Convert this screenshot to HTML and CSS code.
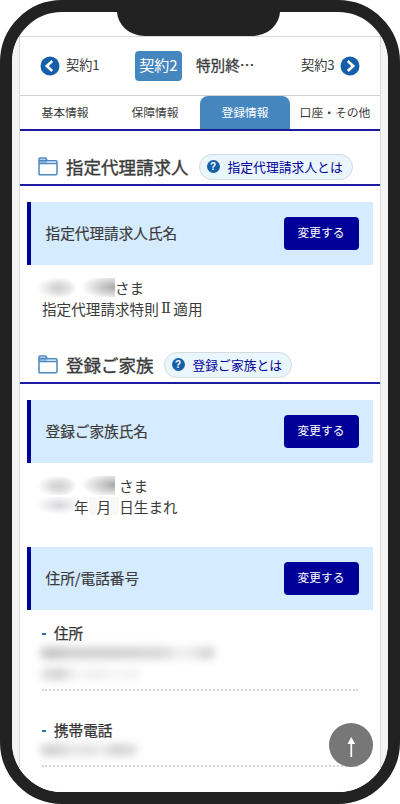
FILE: index.html
```html
<!DOCTYPE html>
<html lang="ja">
<head>
<meta charset="utf-8">
<title>登録情報</title>
<link rel="stylesheet" href="styles.css">
</head>
<body>
<svg class="defs" width="0" height="0">
  <symbol id="folder" viewBox="0 0 20 19">
    <path d="M1 17.6V2.2Q1 1 2.2 1H7Q8 1 8.4 2L9.2 3.8H17.8Q19 3.8 19 5V16.6Q19 17.8 17.8 17.8H1.6Q1 17.8 1 17M1 6.6H19M1.5 3.8H9" fill="none" stroke="#4a88c4" stroke-width="1.5"/>
    <path d="M1.5 2h6.5l1.2 4.2H1.5z" fill="#4a88c4" fill-opacity=".45"/>
  </symbol>
</svg>
<div class="phone">
  <div class="notch"></div>
  <div class="screen">
    <main class="app">
      <nav class="contracts">
        <svg class="arrow" viewBox="0 0 20 20"><circle cx="10" cy="10" r="9.5" fill="#155fa9"/><path d="M12.2 5L6.8 10l5.4 5" fill="none" stroke="#fff" stroke-width="2.6"/></svg>
        <span class="contract prev">契約1</span>
        <span class="current">契約2</span>
        <span class="plan">特別終<span class="dots">…</span></span>
        <span class="contract next">契約3</span>
        <svg class="arrow" viewBox="0 0 20 20"><circle cx="10" cy="10" r="9.5" fill="#155fa9"/><path d="M7.8 5l5.4 5-5.4 5" fill="none" stroke="#fff" stroke-width="2.6"/></svg>
      </nav>
      <nav class="tabs">
        <span class="tab">基本情報</span>
        <span class="tab">保障情報</span>
        <span class="tab active">登録情報</span>
        <span class="tab">口座・その他</span>
      </nav>
      <section class="agent">
        <header class="heading">
          <svg class="folder"><use href="#folder"/></svg>
          <h2>指定代理請求人</h2>
          <span class="help"><i>?</i>指定代理請求人とは</span>
        </header>
        <div class="bar"><h3>指定代理請求人氏名</h3><button>変更する</button></div>
        <div class="details">
          <p><span class="mask name"></span>さま</p>
          <p class="indent">指定代理請求特則<span class="numeral">Ⅱ</span>適用</p>
        </div>
      </section>
      <section class="family">
        <header class="heading">
          <svg class="folder"><use href="#folder"/></svg>
          <h2>登録ご家族</h2>
          <span class="help"><i>?</i>登録ご家族とは</span>
        </header>
        <div class="bar"><h3>登録ご家族氏名</h3><button>変更する</button></div>
        <div class="details">
          <p><span class="mask name"></span><span class="honor">さま</span></p>
          <p><span class="mask year"></span>年<span class="mask month"></span>月<span class="mask day"></span>日生まれ</p>
        </div>
      </section>
      <section class="address">
        <div class="bar"><h3>住所/電話番号</h3><button>変更する</button></div>
        <div class="item first">
          <h4>住所</h4>
          <span class="mask line1"></span>
          <span class="mask line2"></span>
        </div>
        <div class="item second">
          <h4>携帯電話</h4>
          <span class="mask line3"></span>
        </div>
      </section>
    </main>
  </div>
  <div class="to-top"><svg viewBox="0 0 44 44"><path d="M22.3 34V19" stroke="#fff" stroke-width="1.7"/><path d="M22.3 14l3.8 7h-7.6z" fill="#fff"/></svg></div>
</div>
</body>
</html>
```
FILE: styles.css
```css
* { box-sizing: border-box; }
body {
  margin: 0;
  background: #fff;
  color: #3a3a3a;
  font-family: "Noto Sans CJK JP", sans-serif;
}
h2, h3, h4, p { margin: 0; font-weight: 400; }
.defs { position: absolute; }

.phone {
  position: relative;
  width: 400px;
  height: 804px;
  border: 12px solid #222;
  border-radius: 62px;
  overflow: hidden;
  background: #fff;
}
.notch {
  position: absolute;
  top: -1px;
  left: 105px;
  width: 163px;
  height: 25px;
  background: #222;
  border-radius: 0 0 28px 28px / 0 0 25px 25px;
}
.screen {
  margin-top: 24px;
  height: 756px;
  padding: 0 7px;
  background: #f4f4f4;
}
.app {
  height: 756px;
  background: #fff;
  border: 1px solid #d9d9d9;
  border-bottom: 0;
}

.contracts {
  display: flex;
  align-items: center;
  height: 59px;
  padding: 0 20px;
  border-bottom: 1px solid #d0d0d0;
  white-space: nowrap;
}
.arrow { width: 20px; height: 20px; flex: none; }
.contract { font-size: 13.2px; line-height: 20px; padding-bottom: 2px; }
.prev { margin-left: 6px; width: 69px; }
.current {
  width: 47px;
  height: 30px;
  border-radius: 4px;
  background: #4686bf;
  color: #fff;
  font-size: 15px;
  line-height: 27px;
  text-align: center;
}
.plan {
  margin-left: 14px;
  width: 105px;
  padding-bottom: 2px;
  font-size: 14.6px;
  line-height: 20px;
  -webkit-text-stroke: .3px #3a3a3a;
}
.next { width: 39px; }

.tabs {
  display: flex;
  height: 35px;
  border-bottom: 2px solid #1b1b9f;
}
.tab {
  width: 90.25px;
  font-size: 11.8px;
  line-height: 32px;
  text-align: center;
  white-space: nowrap;
}
.active {
  background: #4686bf;
  color: #fff;
  border-radius: 8px 8px 0 0;
}

.heading {
  display: flex;
  align-items: center;
  height: 55px;
  padding: 18px 0 0 18px;
  border-bottom: 2px solid #1b1b9f;
}
.folder { width: 20px; height: 19px; }
h2 {
  margin-left: 8px;
  font-size: 17.5px;
  line-height: 26px;
  -webkit-text-stroke: .35px #3a3a3a;
}
.help {
  display: flex;
  align-items: center;
  margin-left: 10px;
  height: 26px;
  padding: 0 9px 1px 7px;
  border: 1px solid #d4dadd;
  border-radius: 13px;
  background: #eaf6fd;
  color: #000099;
  font-size: 12.8px;
}
.help i {
  width: 13px;
  height: 13px;
  margin-right: 8px;
  border-radius: 50%;
  background: #155fa9;
  color: #fff;
  font: bold 10px/13px "Liberation Sans", sans-serif;
  text-align: center;
}
.bar {
  display: flex;
  align-items: center;
  justify-content: space-between;
  height: 62.5px;
  margin: 16px 7px 0;
  padding: 0 14.5px;
  border-left: 4px solid #000099;
  background: #d5ebff;
}
h3 {
  font-size: 14.65px;
  line-height: 22px;
  padding-bottom: 1px;
  -webkit-text-stroke: .2px #3a3a3a;
}
button {
  width: 75px;
  height: 33px;
  padding: 0 0 2px;
  border: 0;
  border-radius: 4px;
  background: #000099;
  color: #fff;
  font: 400 11.7px/30px "Noto Sans CJK JP", sans-serif;
}
.details {
  height: 64.5px;
  padding: 12px 0 0 15px;
  font-size: 14.6px;
}
.details p {
  display: flex;
  align-items: center;
  height: 21px;
  white-space: nowrap;
}
.details .indent { padding-left: 7px; }
.numeral {
  width: 1em;
  font-family: "DejaVu Serif", serif;
  font-size: 14.6px;
  line-height: 20px;
  text-align: center;
}
.honor { margin-left: 4px; }
.address .bar { margin-top: 20px; }

.mask { display: block; flex: none; }
.name {
  width: 80px;
  height: 19px;
  background:
    radial-gradient(ellipse 20px 11px at 22px 10px, #d2d2d2, transparent),
    radial-gradient(ellipse 16px 10px at 26px 10px, #e2e2e2, transparent),
    radial-gradient(ellipse 34px 13px at 80px 9px, #a8a8a8, transparent);
}
.year {
  width: 39px;
  height: 18px;
  background: radial-gradient(ellipse 23px 10px at 24px 8px, #d8d8dc, transparent);
}
.month { width: 8px; height: 18px; background: #f8f8f8; }
.day { width: 8px; height: 18px; background: #f8f8f8; }

.item {
  margin: 0 22px;
  border-bottom: 2px dotted #d5d5d5;
}
.first { height: 81px; padding-top: 12.5px; }
.second { height: 76px; padding-top: 28px; }
h4 {
  display: flex;
  font-size: 14.6px;
  line-height: 22px;
  -webkit-text-stroke: .25px #222;
}
h4::before {
  content: "";
  width: 4px;
  height: 2px;
  margin: 11px 8px 0 0;
  background: #2c70b8;
}
.item .mask {
  margin-left: -2px;
  height: 12px;
  border-radius: 6px;
  filter: blur(4px);
}
.line1 { width: 175px; margin-top: 3px; background: linear-gradient(90deg, #c4c4c4 0 18px, #d0d0d0 30px 80px, #d8d8d8 125px, #f0f0f0 138px, #ebebeb 150px, #cecece 170px); }
.line2 { width: 100px; margin-top: 9px; background: linear-gradient(90deg, #e2e2e2, #cecece 20px, #f5f5f5 35px, #eee 60px, #f7f7f7 75px, #f0f0f0); }
.line3 { width: 98px; margin-top: 3px; background: linear-gradient(90deg, #d0d0d0 0 16px, #e6e6e6 34px, #dfdfdf 52px, #eee 62px, #cfcfcf 75px, #e0e0e0); }

.to-top {
  position: absolute;
  left: 317px;
  top: 711px;
  width: 44px;
  height: 44px;
  border-radius: 50%;
  background: #767776;
}
.to-top svg { display: block; }
```
